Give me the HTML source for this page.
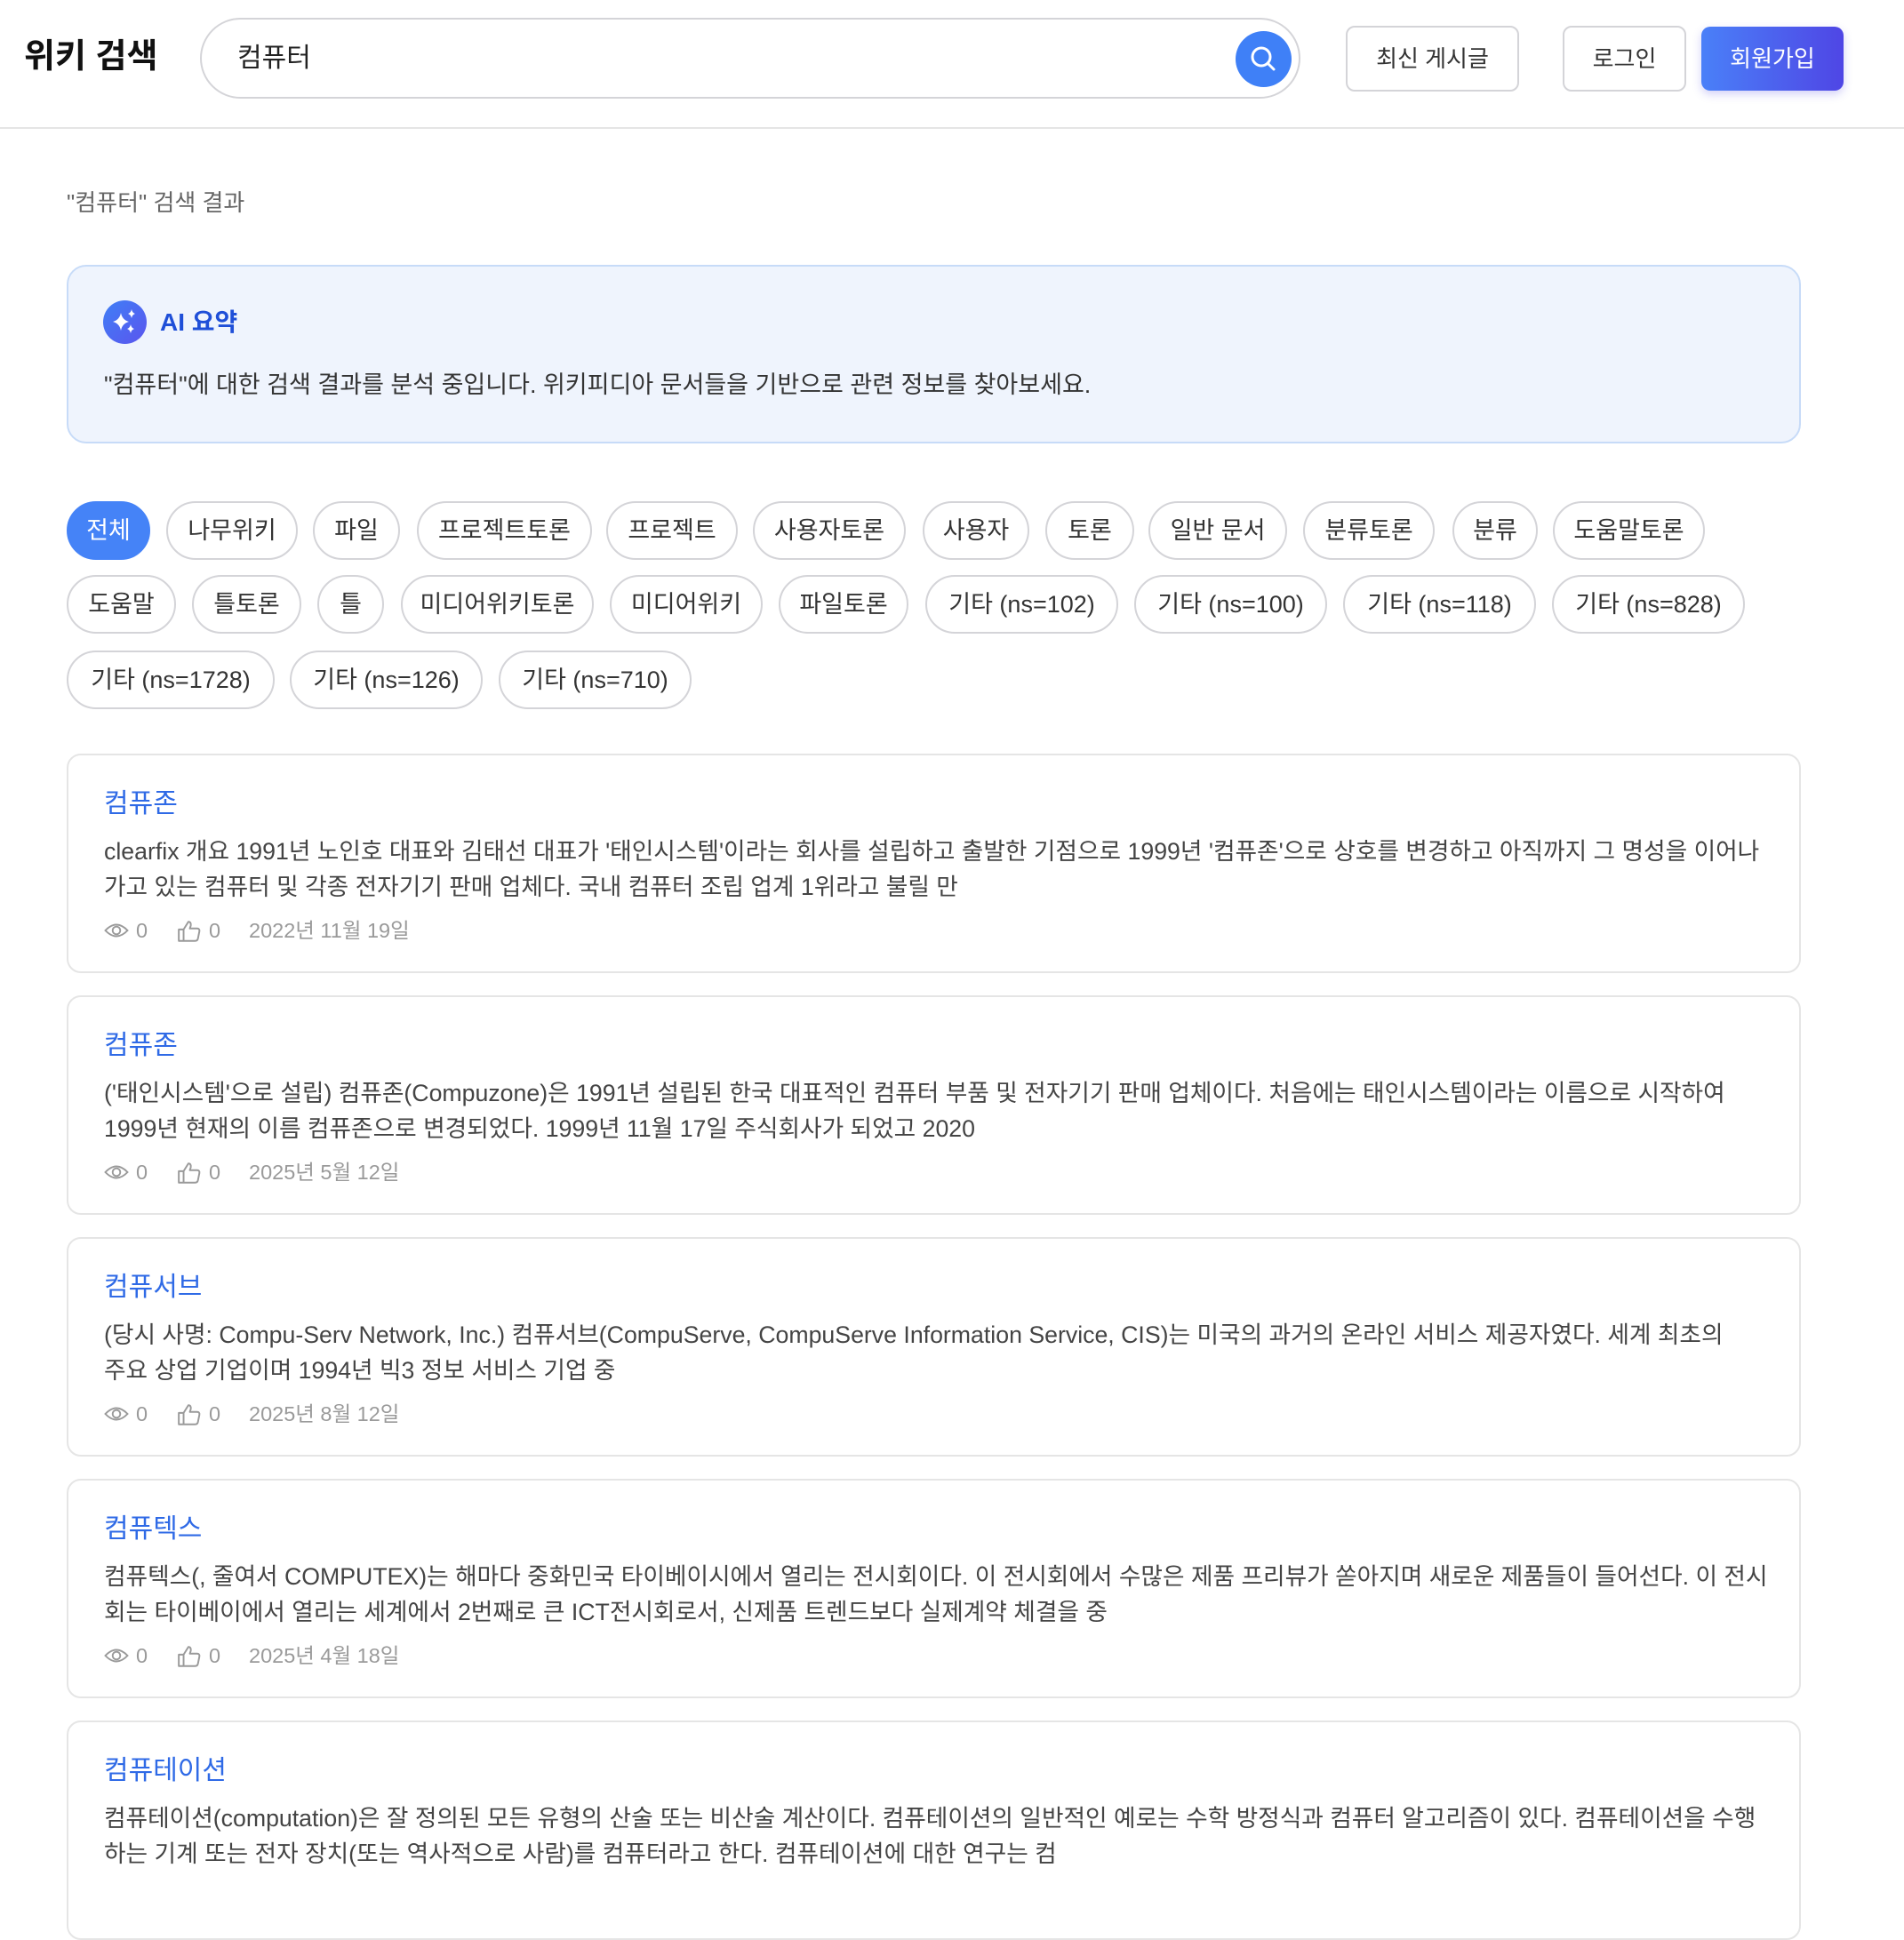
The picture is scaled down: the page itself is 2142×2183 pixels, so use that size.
<!DOCTYPE html>
<html><head><meta charset="utf-8">
<style>
*{margin:0;padding:0;box-sizing:border-box}
body{width:2142px;height:2108px;overflow:hidden;background:#fff;font-family:"Liberation Sans","Noto Sans CJK KR",sans-serif;position:relative;color:#333}
.a{position:absolute}
.hdr{left:0;top:0;width:2142px;height:145px;border-bottom:2px solid #e5e5e5}
.title{left:27px;top:40px;font-size:38px;font-weight:bold;color:#111;line-height:48px}
.search{left:225px;top:20px;width:1238px;height:91px;border:2px solid #d4d4d8;border-radius:46px}
.search span{position:absolute;left:40px;top:0;line-height:87px;font-size:30px;color:#222}
.sbtn{left:1390px;top:35px;width:63px;height:63px;border-radius:50%;background:#3f80f7}
.btn{top:29px;height:74px;border:2px solid #d4d4d8;border-radius:10px;font-size:26px;color:#333;text-align:center;line-height:70px;background:#fff}
.join{left:1914px;top:30px;width:160px;height:72px;border-radius:10px;background:linear-gradient(90deg,#4a80f8,#4f46e5);color:#fff;font-size:26px;text-align:center;line-height:72px;box-shadow:0 4px 10px rgba(79,70,229,.25)}
.res{left:75px;top:210px;font-size:26px;color:#666;line-height:36px}
.ai{left:75px;top:298px;width:1951px;height:201px;border:2px solid #c7dbf8;border-radius:22px;background:#eff4fd}
.aiic{left:116px;top:338px;width:49px;height:49px;border-radius:50%;background:linear-gradient(135deg,#3f7ff6,#5b55ee)}
.ait{left:180px;top:344px;font-size:28px;font-weight:bold;color:#1f4fd8;line-height:38px}
.aid{left:117px;top:414px;font-size:27px;color:#333;line-height:38px}
.chip{height:66px;border:2px solid #d4d4d8;border-radius:33px;font-size:27px;color:#333;text-align:center;line-height:62px;white-space:nowrap}
.on{background:#4583f7;border-color:#4583f7;color:#fff}
.card{left:75px;width:1951px;height:247px;border:2px solid #e5e5e5;border-radius:16px;background:#fff}
.card .t{position:absolute;left:40px;top:35px;font-size:30px;color:#2f6ae6;line-height:40px}
.card .b{position:absolute;left:40px;top:88px;font-size:26.7px;color:#444;line-height:40px;white-space:nowrap}
.card .m{position:absolute;left:40px;top:181px;height:32px;font-size:23.5px;color:#9a9a9a;line-height:32px;white-space:nowrap;width:600px}
.m span,.m svg{position:absolute;top:0}
.m svg{top:4px}
</style></head><body>
<div class="a hdr"></div>
<div class="a title">위키 검색</div>
<div class="a search"><span>컴퓨터</span></div>
<div class="a sbtn"><svg width="63" height="63" viewBox="0 0 63 63"><circle cx="29" cy="29" r="10" fill="none" stroke="#fff" stroke-width="3"/><line x1="36.5" y1="36.5" x2="43" y2="43" stroke="#fff" stroke-width="3" stroke-linecap="round"/></svg></div>
<div class="a btn" style="left:1514px;width:195px">최신 게시글</div>
<div class="a btn" style="left:1758px;width:139px">로그인</div>
<div class="a join">회원가입</div>
<div class="a res">"컴퓨터" 검색 결과</div>
<div class="a ai"></div>
<div class="a aiic"><svg width="49" height="49" viewBox="0 0 49 49" fill="#fff"><path d="M20 14 Q21.5 22 29 24 Q21.5 26 20 34 Q18.5 26 11 24 Q18.5 22 20 14Z"/><path d="M32 10 Q32.8 14 36 15 Q32.8 16 32 20 Q31.2 16 28 15 Q31.2 14 32 10Z"/><path d="M31 27 Q31.8 31 35 32 Q31.8 33 31 37 Q30.2 33 27 32 Q30.2 31 31 27Z"/></svg></div>
<div class="a ait">AI 요약</div>
<div class="a aid">"컴퓨터"에 대한 검색 결과를 분석 중입니다. 위키피디아 문서들을 기반으로 관련 정보를 찾아보세요.</div>

<div class="a chip on" style="left:75px;top:564px;width:94px">전체</div>
<div class="a chip" style="left:187px;top:564px;width:148px">나무위키</div>
<div class="a chip" style="left:352px;top:564px;width:98px">파일</div>
<div class="a chip" style="left:469px;top:564px;width:197px">프로젝트토론</div>
<div class="a chip" style="left:682px;top:564px;width:148px">프로젝트</div>
<div class="a chip" style="left:847px;top:564px;width:172px">사용자토론</div>
<div class="a chip" style="left:1038px;top:564px;width:120px">사용자</div>
<div class="a chip" style="left:1176px;top:564px;width:100px">토론</div>
<div class="a chip" style="left:1292px;top:564px;width:156px">일반 문서</div>
<div class="a chip" style="left:1466px;top:564px;width:148px">분류토론</div>
<div class="a chip" style="left:1634px;top:564px;width:96px">분류</div>
<div class="a chip" style="left:1747px;top:564px;width:171px">도움말토론</div>

<div class="a chip" style="left:75px;top:647px;width:123px">도움말</div>
<div class="a chip" style="left:216px;top:647px;width:123px">틀토론</div>
<div class="a chip" style="left:357px;top:647px;width:75px">틀</div>
<div class="a chip" style="left:451px;top:647px;width:217px">미디어위키토론</div>
<div class="a chip" style="left:686px;top:647px;width:172px">미디어위키</div>
<div class="a chip" style="left:876px;top:647px;width:146px">파일토론</div>
<div class="a chip" style="left:1041px;top:647px;width:217px">기타 (ns=102)</div>
<div class="a chip" style="left:1276px;top:647px;width:217px">기타 (ns=100)</div>
<div class="a chip" style="left:1511px;top:647px;width:217px">기타 (ns=118)</div>
<div class="a chip" style="left:1746px;top:647px;width:217px">기타 (ns=828)</div>

<div class="a chip" style="left:75px;top:732px;width:234px">기타 (ns=1728)</div>
<div class="a chip" style="left:326px;top:732px;width:217px">기타 (ns=126)</div>
<div class="a chip" style="left:561px;top:732px;width:217px">기타 (ns=710)</div>

<div class="a card" style="top:848px"><div class="t">컴퓨존</div><div class="b">clearfix 개요 1991년 노인호 대표와 김태선 대표가 '태인시스템'이라는 회사를 설립하고 출발한 기점으로 1999년 '컴퓨존'으로 상호를 변경하고 아직까지 그 명성을 이어나<br>가고 있는 컴퓨터 및 각종 전자기기 판매 업체다. 국내 컴퓨터 조립 업계 1위라고 불릴 만</div><div class="m" data-d="2022년 11월 19일"></div></div>
<div class="a card" style="top:1120px"><div class="t">컴퓨존</div><div class="b">('태인시스템'으로 설립) 컴퓨존(Compuzone)은 1991년 설립된 한국 대표적인 컴퓨터 부품 및 전자기기 판매 업체이다. 처음에는 태인시스템이라는 이름으로 시작하여<br>1999년 현재의 이름 컴퓨존으로 변경되었다. 1999년 11월 17일 주식회사가 되었고 2020</div><div class="m" data-d="2025년 5월 12일"></div></div>
<div class="a card" style="top:1392px"><div class="t">컴퓨서브</div><div class="b">(당시 사명: Compu-Serv Network, Inc.) 컴퓨서브(CompuServe, CompuServe Information Service, CIS)는 미국의 과거의 온라인 서비스 제공자였다. 세계 최초의<br>주요 상업 기업이며 1994년 빅3 정보 서비스 기업 중</div><div class="m" data-d="2025년 8월 12일"></div></div>
<div class="a card" style="top:1664px"><div class="t">컴퓨텍스</div><div class="b">컴퓨텍스(, 줄여서 COMPUTEX)는 해마다 중화민국 타이베이시에서 열리는 전시회이다. 이 전시회에서 수많은 제품 프리뷰가 쏟아지며 새로운 제품들이 들어선다. 이 전시<br>회는 타이베이에서 열리는 세계에서 2번째로 큰 ICT전시회로서, 신제품 트렌드보다 실제계약 체결을 중</div><div class="m" data-d="2025년 4월 18일"></div></div>
<div class="a card" style="top:1936px"><div class="t">컴퓨테이션</div><div class="b">컴퓨테이션(computation)은 잘 정의된 모든 유형의 산술 또는 비산술 계산이다. 컴퓨테이션의 일반적인 예로는 수학 방정식과 컴퓨터 알고리즘이 있다. 컴퓨테이션을 수행<br>하는 기계 또는 전자 장치(또는 역사적으로 사람)를 컴퓨터라고 한다. 컴퓨테이션에 대한 연구는 컴</div></div>
<script>
var eye='<svg style="left:0" width="28" height="24" viewBox="0 0 28 24"><path d="M1.5 12 Q14 -1 26.5 12 Q14 25 1.5 12Z" fill="none" stroke="#9a9a9a" stroke-width="1.9"/><circle cx="14" cy="12" r="4.3" fill="none" stroke="#9a9a9a" stroke-width="1.9"/></svg>';
var th='<svg style="left:82px" width="28" height="26" viewBox="0 0 26 24"><path d="M2 10 H7 V22 H2Z M7 10 L12 2 Q15 2 14.5 6 L13.5 9 H21 Q24 9 23.5 12 L22 19.5 Q21.5 22 19 22 H7" fill="none" stroke="#9a9a9a" stroke-width="1.8" stroke-linejoin="round"/></svg>';
document.querySelectorAll('.m').forEach(function(m){m.innerHTML=eye+'<span style="left:36px">0</span>'+th+'<span style="left:118px">0</span><span style="left:163px">'+m.getAttribute('data-d')+'</span>';});
</script>
</body></html>
